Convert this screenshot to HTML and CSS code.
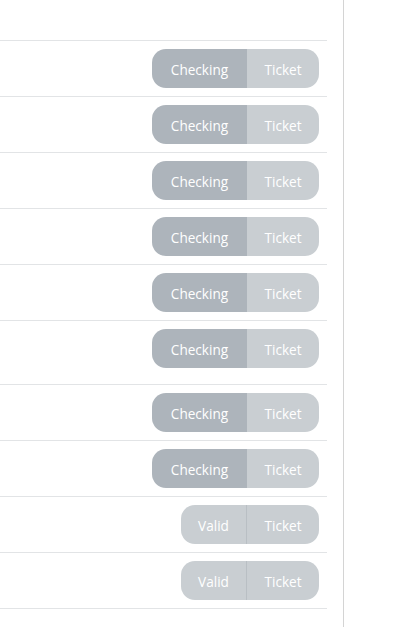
FILE: index.html
```html
<!DOCTYPE html>
<html>
<head>
<meta charset="utf-8">
<link rel="stylesheet" href="styles.css">
</head>
<body>
<div class="panel">
  <div class="table">
    <div class="head"></div>
    <div class="row"><div class="pill"><span class="seg seg-check">Checking</span><span class="seg seg-ticket">Ticket</span></div></div>
    <div class="row"><div class="pill"><span class="seg seg-check">Checking</span><span class="seg seg-ticket">Ticket</span></div></div>
    <div class="row"><div class="pill"><span class="seg seg-check">Checking</span><span class="seg seg-ticket">Ticket</span></div></div>
    <div class="row"><div class="pill"><span class="seg seg-check">Checking</span><span class="seg seg-ticket">Ticket</span></div></div>
    <div class="row"><div class="pill"><span class="seg seg-check">Checking</span><span class="seg seg-ticket">Ticket</span></div></div>
    <div class="row row-tall"><div class="pill"><span class="seg seg-check">Checking</span><span class="seg seg-ticket">Ticket</span></div></div>
    <div class="row"><div class="pill"><span class="seg seg-check">Checking</span><span class="seg seg-ticket">Ticket</span></div></div>
    <div class="row"><div class="pill"><span class="seg seg-check">Checking</span><span class="seg seg-ticket">Ticket</span></div></div>
    <div class="row"><div class="pill"><span class="seg seg-valid">Valid</span><span class="seg seg-ticket seg-ticket-valid">Ticket</span></div></div>
    <div class="row"><div class="pill"><span class="seg seg-valid">Valid</span><span class="seg seg-ticket seg-ticket-valid">Ticket</span></div></div>
  </div>
</div>
</body>
</html>
```

FILE: styles.css
```css
html, body {
  margin: 0;
  padding: 0;
  background: #ffffff;
}
body {
  font-family: "Open Sans", "Liberation Sans", sans-serif;
}
.panel {
  width: 343px;
  height: 627px;
  border-right: 1px solid #d4d4d4;
}
.table {
  width: 327px;
}
.head {
  height: 40px;
  border-bottom: 1px solid #e2e4e6;
}
.row {
  box-sizing: content-box;
  height: 47px;
  padding: 8px 8px 0 0;
  border-bottom: 1px solid #e2e4e6;
  display: flex;
  justify-content: flex-end;
  align-items: flex-start;
}
.row-tall {
  height: 55px;
}
.pill {
  display: flex;
  height: 39px;
  border-radius: 14px;
  overflow: hidden;
}
.seg {
  display: flex;
  align-items: center;
  justify-content: center;
  box-sizing: border-box;
  padding-top: 1px;
  color: #ffffff;
  font-size: 13.6px;
  height: 39px;
}
.seg-check {
  width: 95px;
  background: #adb4bb;
}
.seg-ticket {
  width: 72px;
  background: #c9ced2;
}
.seg-valid {
  width: 66px;
  background: #c9ced2;
  border-right: 1px solid #b9bfc4;
}
.seg-ticket-valid {
  width: 72px;
}
```
